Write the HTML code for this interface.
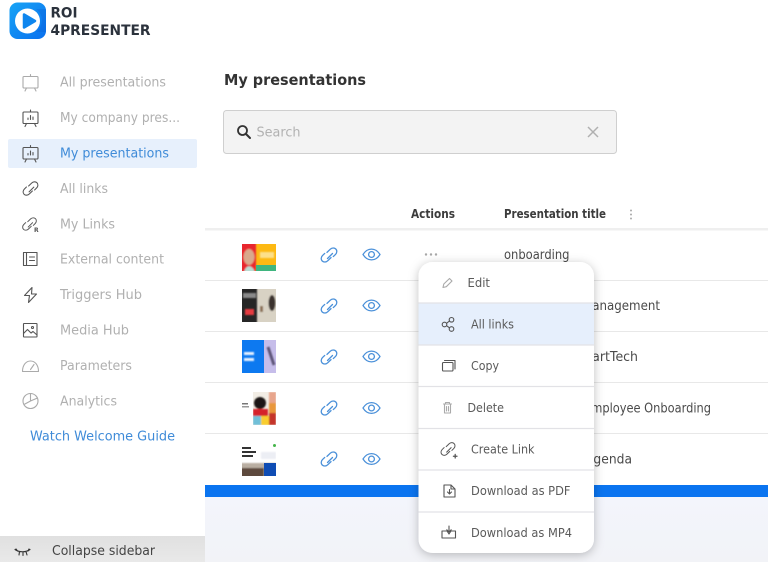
<!DOCTYPE html>
<html><head><meta charset="utf-8"><title>My presentations</title>
<style>
html,body{margin:0;padding:0;background:#fff;width:768px;height:562px;overflow:hidden}
svg{display:block;filter:blur(.35px)}
text{font-family:"DejaVu Sans","Liberation Sans",sans-serif;font-size:13px}
.n{fill:#b0b0b0}
.d{fill:#4a4a4a}
.m{fill:#5a5a5a}
.ic{fill:none;stroke:#555;stroke-width:1.1;stroke-linecap:round;stroke-linejoin:round}
.ig{fill:none;stroke:#aaa;stroke-width:1.1;stroke-linecap:round;stroke-linejoin:round}
.bl{fill:none;stroke:#4a90d9;stroke-width:1.3;stroke-linecap:round;stroke-linejoin:round}
.ln{stroke:#e8e8e8;stroke-width:1}
.dv{stroke:#e2e2e6;stroke-width:1.2}
</style></head><body>
<svg width="768" height="562" viewBox="0 0 768 562" xmlns="http://www.w3.org/2000/svg">
<defs>
<linearGradient id="lg" x1="0" y1="0" x2="1" y2="1"><stop offset="0" stop-color="#17a4f6"/><stop offset="1" stop-color="#0a6fee"/></linearGradient>
<linearGradient id="cb" x1="0" y1="0" x2="0" y2="1"><stop offset="0" stop-color="#e0e0e0"/><stop offset="1" stop-color="#e9e9e9"/></linearGradient>
<linearGradient id="bt" x1="0" y1="0" x2="0" y2="1"><stop offset="0" stop-color="#f3f5fc"/><stop offset="1" stop-color="#f2f3f7"/></linearGradient>
<filter id="sh" x="-20%" y="-10%" width="140%" height="120%"><feDropShadow dx="0" dy="2" stdDeviation="5" flood-color="#000" flood-opacity=".25"/></filter>
<filter id="soft"><feGaussianBlur stdDeviation=".7"/></filter>
<g id="link"><path d="M-1.500 3.500 L3.500-1.500 M-2 -2.600 L1.300-5.800 C3-7.400 5.400-7.400 6.800-6 C8.200-4.600 8.100-2.200 6.500-.6 L4.300 1.600 M2 2.600 L-1.300 5.800 C-3 7.400-5.400 7.400-6.800 6 C-8.200 4.600-8.100 2.200-6.500.6 L-4.300-1.600"/></g>
<g id="eye"><path d="M-8.500 0 C-5.500-4.700-2.800-5.400 0-5.400 C2.800-5.400 5.500-4.700 8.500 0 C5.500 4.700 2.800 5.400 0 5.400 C-2.800 5.400-5.500 4.700-8.500 0Z"/><circle r="2.900"/></g>
<g id="board"><rect x="-7.500" y="-6" width="15" height="11.500" rx="1"/><path d="M0-6V-8M-4 5.500L-5.500 8.500M4 5.500L5.500 8.500"/></g>
</defs>

<rect width="768" height="562" fill="#fff"/>

<!-- logo -->
<rect x="9.500" y="2.500" width="36.500" height="36.500" rx="8" fill="url(#lg)"/>
<path d="M36 32A14 14 0 0 0 36 9L46 9V32Z" fill="#0b62d8" opacity=".35"/>
<circle cx="27.500" cy="21" r="12.500" fill="#fff"/>
<path d="M24 14.500 L35 21 L24 27.500Z" fill="#0f86ee" stroke="#0f86ee" stroke-width="2.500" stroke-linejoin="round"/>
<text x="50.500" y="17.500" textLength="27" lengthAdjust="spacingAndGlyphs" style="font-weight:bold;font-size:14px;fill:#2b323c">ROI</text>
<text x="50.500" y="35" textLength="100" lengthAdjust="spacingAndGlyphs" style="font-weight:bold;font-size:14px;fill:#2b323c">4PRESENTER</text>

<!-- nav -->
<rect x="8" y="139" width="189" height="29" rx="2" fill="#e7f0fc"/>
<g class="ig" transform="translate(30.500,82.500)"><use href="#board"/></g>
<g class="ic" transform="translate(30.500,118)"><use href="#board"/><path d="M-2.500 1.500V0M0 1.500V-2.500M2.500 1.500V-1"/></g>
<g class="ic" transform="translate(30.500,153.500)"><use href="#board"/><path d="M-2.500 1.500V0M0 1.500V-2.500M2.500 1.500V-1"/></g>
<g class="ic" transform="translate(30.500,188.500) scale(.95)"><use href="#link"/></g>
<g class="ic" transform="translate(29.500,224) scale(.88)"><use href="#link"/></g>
<text x="34" y="232" style="font-size:6px;font-weight:bold;fill:#555">R</text>
<g class="ic"><path d="M23.500 252.500H37V265.500H23.500ZM26.500 252.500V265.500M29.500 257H34.500M29.500 260.500H34.500"/></g>
<path class="ic" d="M32 287.500L24.500 295.500H29.500L28.500 302.500L36.500 294H31.500Z"/>
<g class="ic"><rect x="23.500" y="323.500" width="13.500" height="13.500" rx=".5"/><circle cx="32.500" cy="327.500" r="1"/><path d="M23.500 333.500L27.500 329.500L31 333L33 331.500L37 335"/></g>
<path class="ig" d="M22.500 371.500C22.500 365 26 361 30.500 361C35 361 38.500 365 38.500 371.500ZM30.500 369.500L34 364.500"/>
<g class="ig"><circle cx="30.500" cy="401" r="7.500"/><path d="M30.500 393.500V401L24 404.500M30.500 401L37.500 398"/></g>

<text class="n" x="60" y="86.500" textLength="106" lengthAdjust="spacingAndGlyphs">All presentations</text>
<text class="n" x="60" y="122" textLength="120" lengthAdjust="spacingAndGlyphs">My company pres...</text>
<text x="60" y="157.500" textLength="109" lengthAdjust="spacingAndGlyphs" fill="#3f8bd8">My presentations</text>
<text class="n" x="60" y="193" textLength="48" lengthAdjust="spacingAndGlyphs">All links</text>
<text class="n" x="60" y="228.500" textLength="55" lengthAdjust="spacingAndGlyphs">My Links</text>
<text class="n" x="60" y="263.500" textLength="104" lengthAdjust="spacingAndGlyphs">External content</text>
<text class="n" x="60" y="299" textLength="82" lengthAdjust="spacingAndGlyphs">Triggers Hub</text>
<text class="n" x="60" y="334.500" textLength="69" lengthAdjust="spacingAndGlyphs">Media Hub</text>
<text class="n" x="60" y="370" textLength="72" lengthAdjust="spacingAndGlyphs">Parameters</text>
<text class="n" x="60" y="405.500" textLength="57" lengthAdjust="spacingAndGlyphs">Analytics</text>
<text x="30" y="440.500" textLength="145" lengthAdjust="spacingAndGlyphs" fill="#3f8bd8">Watch Welcome Guide</text>

<!-- collapse -->
<rect x="0" y="536" width="205" height="26" fill="url(#cb)"/>
<path d="M15 549.500C19 552.500 26 552.500 30 549.500M16 549L17.500 551M19.500 551.500L19 555M23 552V555.500M26 551.500L27 555M29 549L28 551" fill="none" stroke="#333" stroke-width="1.100" stroke-linecap="round"/>
<text x="52" y="555" textLength="103" lengthAdjust="spacingAndGlyphs" fill="#444">Collapse sidebar</text>

<!-- header -->
<text x="224" y="85" textLength="142" lengthAdjust="spacingAndGlyphs" style="font-size:15.500px;font-weight:bold;fill:#333">My presentations</text>
<rect x="223.500" y="110.500" width="393" height="43" rx="3" fill="#f3f3f3" stroke="#cfcfcf"/>
<circle cx="242.500" cy="130.500" r="4.500" fill="none" stroke="#333" stroke-width="1.800"/>
<path d="M246 134L250 138" stroke="#333" stroke-width="2" stroke-linecap="round"/>
<text x="256.500" y="136.500" textLength="44" lengthAdjust="spacingAndGlyphs" fill="#b2b2b2">Search</text>
<path d="M588 127L598 137M598 127L588 137" stroke="#b0b0b0" stroke-width="1.500"/>

<!-- table head -->
<text x="411" y="218" textLength="44" lengthAdjust="spacingAndGlyphs" style="font-size:12px;font-weight:bold;fill:#3c3c3c">Actions</text>
<text x="504" y="218" textLength="102" lengthAdjust="spacingAndGlyphs" style="font-size:12px;font-weight:bold;fill:#3c3c3c">Presentation title</text>
<g fill="#aaa"><circle cx="631" cy="210.500" r="1"/><circle cx="631" cy="214.500" r="1"/><circle cx="631" cy="218.500" r="1"/></g>
<rect x="205" y="228" width="563" height="2.500" fill="#efefef"/>
<line class="ln" x1="205" y1="280.500" x2="768" y2="280.500"/>
<line class="ln" x1="205" y1="331.500" x2="768" y2="331.500"/>
<line class="ln" x1="205" y1="382.500" x2="768" y2="382.500"/>
<line class="ln" x1="205" y1="433.500" x2="768" y2="433.500"/>

<!-- thumb 1 -->
<svg x="242" y="244" width="34" height="27" viewBox="242 244 34 27">
<rect x="242" y="244" width="34" height="27" fill="#fdb913"/>
<g filter="url(#soft)">
<rect x="240" y="242" width="16" height="31" fill="#e8262d"/>
<ellipse cx="249" cy="257" rx="5.500" ry="8" fill="#d9a98c"/>
<path d="M244 273C245 264 253 264 255 273Z" fill="#b9dcd3"/>
<rect x="260" y="252" width="14" height="6" fill="#fde08a"/>
</g>
<rect x="256" y="265" width="20" height="6" fill="#3fb57f"/>
</svg>
<!-- thumb 2 -->
<svg x="242" y="289" width="34" height="33" viewBox="242 289 34 33">
<rect x="242" y="289" width="34" height="33" fill="#262626"/>
<g filter="url(#soft)">
<rect x="257" y="287" width="21" height="37" fill="#d8d2c4"/>
<rect x="245" y="309" width="9" height="6" fill="#e63a3f"/>
<rect x="243" y="293" width="13" height="5" fill="#8a8a8a"/>
<ellipse cx="272" cy="303" rx="3.500" ry="8" fill="#3a332e"/>
<rect x="260" y="306" width="3" height="6" fill="#8b6f55"/>
</g>
</svg>
<!-- thumb 3 -->
<svg x="242" y="340" width="34" height="33" viewBox="242 340 34 33">
<rect x="242" y="340" width="22" height="33" fill="#0d79f0"/>
<rect x="264" y="340" width="12" height="33" fill="#c6bdea"/>
<g filter="url(#soft)">
<rect x="244" y="352" width="10" height="3" fill="#e6f1ff"/>
<rect x="244" y="358" width="10" height="3" fill="#e6f1ff"/>
<path d="M268 347L274 365" stroke="#5d5478" stroke-width="3"/>
</g>
</svg>
<!-- thumb 4 -->
<svg x="253" y="392" width="23" height="33" viewBox="253 392 23 33">
<rect x="253" y="392" width="23" height="33" fill="#f2ede5"/>
<g filter="url(#soft)">
<circle cx="260" cy="403" r="6" fill="#1c1412"/>
<rect x="253" y="409" width="15" height="7" fill="#d5222a"/>
<rect x="253" y="416" width="8" height="9" fill="#6fbfd8"/>
<rect x="261" y="416" width="8" height="9" fill="#f9cd2f"/>
<rect x="269" y="392" width="7" height="11" fill="#e8a58c"/>
<rect x="269" y="403" width="7" height="10" fill="#e9973a"/>
<rect x="269" y="413" width="7" height="12" fill="#c4342c"/>
</g>
</svg>
<rect x="242" y="403" width="6" height="1.500" fill="#777"/>
<rect x="242" y="406" width="7" height="1.500" fill="#999"/>
<!-- thumb 5 -->
<svg x="242" y="443" width="34" height="33" viewBox="242 443 34 33">
<g filter="url(#soft)">
<rect x="240" y="463" width="36" height="15" fill="#b9aea2"/>
<rect x="240" y="468" width="24" height="10" fill="#5d4a3d"/>
<rect x="261" y="452" width="15" height="7" fill="#eceef4"/>
</g>
<rect x="264" y="463" width="12" height="13" fill="#0f4db4"/>
<rect x="242" y="447" width="9" height="2" fill="#333"/>
<rect x="242" y="451" width="14" height="2" fill="#333"/>
<rect x="242" y="455" width="11" height="2" fill="#333"/>
<circle cx="274.500" cy="445.500" r="1.500" fill="#45b54a"/>
</svg>

<!-- row icons -->
<g class="bl">
<use href="#link" transform="translate(329,255)"/>
<use href="#link" transform="translate(329,306)"/>
<use href="#link" transform="translate(329,357)"/>
<use href="#link" transform="translate(329,408)"/>
<use href="#link" transform="translate(329,459)"/>
<use href="#eye" transform="translate(371.500,254.500)"/>
<use href="#eye" transform="translate(371.500,305.500)"/>
<use href="#eye" transform="translate(371.500,356.500)"/>
<use href="#eye" transform="translate(371.500,408)"/>
<use href="#eye" transform="translate(371.500,459)"/>
</g>
<g fill="#a8a8a8"><circle cx="426" cy="254.500" r="1.200"/><circle cx="431" cy="254.500" r="1.200"/><circle cx="436" cy="254.500" r="1.200"/></g>

<!-- titles -->
<text class="d" x="504" y="259" textLength="65.500" lengthAdjust="spacingAndGlyphs">onboarding</text>
<text class="d" x="582" y="310" textLength="78" lengthAdjust="spacingAndGlyphs">Management</text>
<text class="d" x="572" y="361" textLength="66" lengthAdjust="spacingAndGlyphs">SmartTech</text>
<text class="d" x="584" y="412.500" textLength="127" lengthAdjust="spacingAndGlyphs">Employee Onboarding</text>
<text class="d" x="585" y="463.500" textLength="47" lengthAdjust="spacingAndGlyphs">Agenda</text>

<!-- bottom -->
<rect x="205" y="485" width="563" height="12" fill="#0a74f0"/>
<rect x="205" y="497" width="563" height="65" fill="url(#bt)"/>

<!-- context menu -->
<rect x="418.500" y="262" width="175.500" height="291" rx="14" fill="#fff" filter="url(#sh)"/>
<rect x="418.500" y="303.500" width="175.500" height="42" fill="#e6effc"/>
<line class="dv" x1="418.500" y1="303" x2="594" y2="303"/>
<line class="dv" x1="418.500" y1="345" x2="594" y2="345"/>
<line class="dv" x1="418.500" y1="386.500" x2="594" y2="386.500"/>
<line class="dv" x1="418.500" y1="428.500" x2="594" y2="428.500"/>
<line class="dv" x1="418.500" y1="470" x2="594" y2="470"/>
<line class="dv" x1="418.500" y1="512" x2="594" y2="512"/>

<path class="ig" d="M443 287.500L443.800 284L449.500 278.500L452 281L446.300 286.700Z"/>
<g class="ic"><circle cx="444.500" cy="324.500" r="2.300"/><circle cx="451.500" cy="319.800" r="2.300"/><circle cx="451.500" cy="329" r="2.300"/><path d="M446.500 323.300L449.500 321M446.500 325.700L449.500 327.800"/></g>
<g class="ic"><rect x="442.500" y="362.500" width="10.500" height="8.500" rx="1"/><path d="M444.500 360.500H455V369"/></g>
<g class="ig"><path d="M443.500 404H451.500M444.500 404V413H450.500V404M445.500 404V402.500H449.500V404M446.500 406.500V411M448.500 406.500V411"/></g>
<g class="ic" transform="translate(448,449) scale(.9)"><use href="#link"/><path d="M8 6V10M6 8H10" stroke-width="1.400"/></g>
<g class="ic"><path d="M444 485H451L455 489V497H444ZM451 485V489H455M449.500 489.500V494M447.500 492L449.500 494L451.500 492"/></g>
<g class="ic"><path d="M442 531H447L449 534L451 531H455.500V538H442ZM449 526V532M446.800 529.800L449 532L451.200 529.800"/></g>

<text class="m" x="467.500" y="287" textLength="22.500" lengthAdjust="spacingAndGlyphs" style="font-size:12.500px">Edit</text>
<text class="m" x="471" y="328.500" textLength="43" lengthAdjust="spacingAndGlyphs" style="font-size:12.500px">All links</text>
<text class="m" x="471" y="370" textLength="28" lengthAdjust="spacingAndGlyphs" style="font-size:12.500px">Copy</text>
<text class="m" x="467.500" y="412" textLength="36.500" lengthAdjust="spacingAndGlyphs" style="font-size:12.500px">Delete</text>
<text class="m" x="471" y="453.500" textLength="63.500" lengthAdjust="spacingAndGlyphs" style="font-size:12.500px">Create Link</text>
<text class="m" x="471" y="495" textLength="99.500" lengthAdjust="spacingAndGlyphs" style="font-size:12.500px">Download as PDF</text>
<text class="m" x="471" y="537" textLength="101" lengthAdjust="spacingAndGlyphs" style="font-size:12.500px">Download as MP4</text>
</svg>
</body></html>
